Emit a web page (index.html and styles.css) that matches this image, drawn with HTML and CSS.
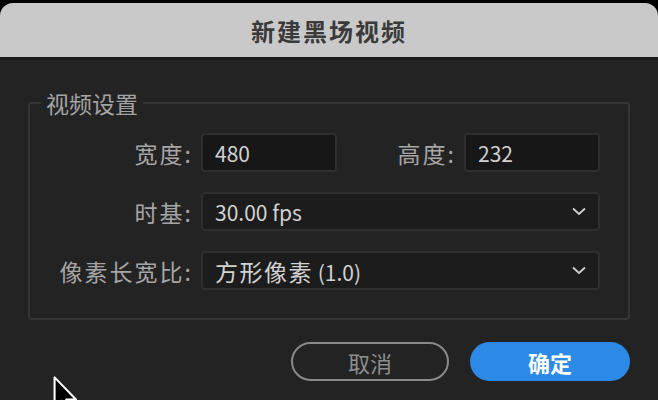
FILE: index.html
```html
<!DOCTYPE html>
<html lang="zh-CN">
<head>
  <meta charset="UTF-8" />
  <title>新建黑场视频</title>
  <link rel="stylesheet" href="styles.css">
</head>
<body>
  <div class="window">
    <header class="titlebar">新建黑场视频</header>
    <main class="content">
      <fieldset class="group">
        <legend>视频设置</legend>
        <div class="fields">
          <label class="label">宽度:</label>
          <div class="input">480</div>
          <label class="label">高度:</label>
          <div class="input">232</div>

          <label class="label">时基:</label>
          <div class="select wide">
            <span>30.00 fps</span>
            <svg class="chevron" width="14" height="9" viewBox="0 0 14 9"><path d="M1 1.5 L7 7 L13 1.5" fill="none" stroke="#cfcfcf" stroke-width="1.8"/></svg>
          </div>

          <label class="label">像素长宽比:</label>
          <div class="select wide">
            <span><span class="cjk">方形像素</span> (1.0)</span>
            <svg class="chevron" width="14" height="9" viewBox="0 0 14 9"><path d="M1 1.5 L7 7 L13 1.5" fill="none" stroke="#cfcfcf" stroke-width="1.8"/></svg>
          </div>
        </div>
      </fieldset>

      <div class="actions">
        <button class="btn cancel">取消</button>
        <button class="btn ok">确定</button>
      </div>
    </main>
  </div>

  <!-- mouse pointer -->
  <svg class="cursor" width="28" height="40" viewBox="0 0 20 29">
    <path d="M1 1 L1 23 L6 18 L9.5 26.5 L13 25 L9.5 17 L16.5 17 Z" fill="#000" stroke="#fff" stroke-width="1.5" stroke-linejoin="round"/>
  </svg>
</body>
</html>
```

FILE: styles.css
```css
:root {
  --bg: #232323;
  --title-bg: #c9c9c9;
  --label: #a6a6a6;
  --field-text: #d2d2d2;
  --line: #353535;
  --blue: #2c89e5;
}
html, body {
  margin: 0;
  height: 100%;
}
body {
  background: #000;
  font-family: "Noto Sans CJK SC", "Noto Sans", sans-serif;
  overflow: hidden;
  position: relative;
}
.window {
  margin-top: 3px;
  height: calc(100% - 3px);
  background: var(--bg);
  border-radius: 13px 13px 0 0;
  display: flex;
  flex-direction: column;
}
.titlebar {
  height: 54px;
  background: var(--title-bg);
  border-radius: 13px 13px 0 0;
  border-bottom: 3px solid #1b1b1b;
  color: #3a3a3a;
  font-size: 24px;
  font-weight: bold;
  letter-spacing: 2px;
  display: flex;
  align-items: center;
  justify-content: center;
}
.content {
  padding: 31px 28px 0 28px;
}
.group {
  margin: 0;
  padding: 18px 28px 28px 0;
  border: 2px solid var(--line);
  border-radius: 4px;
  min-width: 0;
}
.group legend {
  margin-left: 11px;
  padding: 0 5px;
  font-size: 23px;
  line-height: 24px;
  color: #a3a3a3;
}
.fields {
  display: grid;
  grid-template-columns: 161px 136px 1fr 136px;
  grid-auto-rows: 39px;
  column-gap: 10px;
  row-gap: 20px;
}
.label {
  color: var(--label);
  font-size: 23px;
  letter-spacing: 2px;
  margin-right: -2px;
  white-space: nowrap;
  display: flex;
  align-items: center;
  justify-content: flex-end;
}
.input, .select {
  box-sizing: border-box;
  border: 2px solid #2f2f2f;
  border-radius: 4px;
  color: var(--field-text);
  font-size: 21px;
  display: flex;
  align-items: center;
  padding: 0 12px;
}
.input {
  background: #171717;
}
.select {
  background: #1c1c1c;
  justify-content: space-between;
}
.select .cjk {
  font-size: 23px;
  letter-spacing: 1.5px;
}
.select.wide {
  grid-column: 2 / 5;
}
.actions {
  display: flex;
  justify-content: flex-end;
  gap: 21px;
  margin-top: 22px;
}
.btn {
  box-sizing: border-box;
  height: 39px;
  border-radius: 20px;
  font-family: inherit;
  font-size: 22px;
  padding: 0;
}
.cancel {
  width: 158px;
  background: transparent;
  border: 2px solid #8a8a8a;
  color: #8e8e8e;
}
.ok {
  width: 160px;
  background: var(--blue);
  border: none;
  color: #fff;
  font-weight: bold;
}
.cursor {
  position: absolute;
  left: 53px;
  top: 376px;
}
```
